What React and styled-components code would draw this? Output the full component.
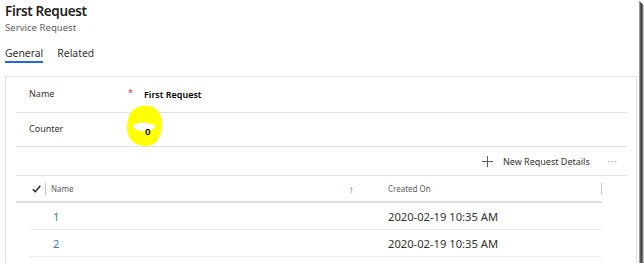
import styled, { createGlobalStyle } from "styled-components";

const GlobalStyle = createGlobalStyle`
  html, body {
    margin: 0;
    padding: 0;
    background: #ffffff;
  }
  body {
    font-family: "Segoe UI", "Noto Sans", "Liberation Sans", sans-serif;
    color: #323130;
  }
`;

const rows = [
  { id: "1", created: "2020-02-19 10:35 AM" },
  { id: "2", created: "2020-02-19 10:35 AM" },
];

export default function App() {
  return (
    <>
      <GlobalStyle />
      <Frame>
        <Header>
          <Title>First Request</Title>
          <Subtitle>Service Request</Subtitle>
          <Tabs>
            <Tab $active>General</Tab>
            <Tab>Related</Tab>
          </Tabs>
        </Header>

        <Card>
          <FormRow $height={35}>
            <FieldLabel>Name</FieldLabel>
            <Required>*</Required>
            <FieldValue $bold>First Request</FieldValue>
          </FormRow>
          <FormRow $height={33}>
            <FieldLabel>Counter</FieldLabel>
            <span />
            <FieldValue $bold>
              <Zero>0</Zero>
            </FieldValue>
            <Highlight viewBox="0 0 40 44" aria-hidden="true">
              <path
                d="M19 1.5 C30 0.5 37.5 9 37 21 C36.5 33 31 42.5 19.5 42 C8.5 41.5 1.5 34 2 22 C2.5 10 8 2.5 19 1.5 Z"
                fill="#ffff00"
              />
              <path d="M7.5 22.5 C11 17.5 24 17 31 22.5 C25 29 12 29 7.5 22.5 Z" fill="#ffffff" />
            </Highlight>
          </FormRow>

          <Toolbar>
            <ToolButton>
              <svg width="11" height="11" viewBox="0 0 11 11" aria-hidden="true">
                <path d="M5.5 0 V11 M0 5.5 H11" stroke="#605e5c" strokeWidth="1" />
              </svg>
              <span>New Request Details</span>
            </ToolButton>
            <More>···</More>
          </Toolbar>

          <GridHead>
            <CheckCell>
              <svg width="9" height="8" viewBox="0 0 9 8" aria-hidden="true">
                <path d="M0.8 4.2 L3.3 6.7 L8.3 0.8" stroke="#201f1e" strokeWidth="1.4" fill="none" />
              </svg>
            </CheckCell>
            <HeadCell $first>
              <span>Name</span>
              <SortArrow>↑</SortArrow>
            </HeadCell>
            <HeadCell $last>Created On</HeadCell>
          </GridHead>

          {rows.map((r) => (
            <GridRow key={r.id}>
              <span />
              <LinkCell>{r.id}</LinkCell>
              <DateCell>{r.created}</DateCell>
            </GridRow>
          ))}
        </Card>
      </Frame>
    </>
  );
}

const Frame = styled.div`
  position: relative;
  width: 639px;
  height: 263px;
  overflow: hidden;
  background: #ffffff;
  box-shadow: 1px 1px 0 #9a9a9a, 2px 2px 0 #5a5a5a, 3px 3px 0 #474747, 4px 4px 0 #6a6a6a,
    5px 5px 1px #c8c8c8;
`;

const Header = styled.div`
  padding-left: 5px;
`;

const Title = styled.div`
  font-size: 13.5px;
  font-weight: 600;
  letter-spacing: -0.35px;
  line-height: 20px;
  color: #201f1e;
  padding-top: 1px;
`;

const Subtitle = styled.div`
  font-size: 9.6px;
  line-height: 13px;
  color: #605e5c;
`;

const Tabs = styled.div`
  display: flex;
  gap: 14px;
  margin-top: 11px;
`;

const Tab = styled.div`
  font-size: 10.4px;
  line-height: 16px;
  color: #323130;
  border-bottom: 2px solid ${(p) => (p.$active ? "#2266e3" : "transparent")};
`;

const Card = styled.div`
  margin: 13px 0 0 5px;
  width: 611px;
  height: 200px;
  padding: 0 9px 0 10px;
  border: 1px solid #e1dfdd;
  border-bottom: none;
`;

const FormRow = styled.div`
  position: relative;
  display: grid;
  grid-template-columns: 99px 16px 1fr;
  align-items: center;
  height: ${(p) => p.$height}px;
  padding-left: 13px;
  border-bottom: 1px solid #e1dfdd;
`;

const FieldLabel = styled.div`
  font-size: 9px;
  color: #323130;
  margin-top: -2px;
`;

const Required = styled.div`
  color: #d13438;
  font-size: 9px;
  align-self: start;
  margin-top: 9px;
`;

const FieldValue = styled.div`
  position: relative;
  z-index: 1;
  font-size: 9px;
  font-weight: ${(p) => (p.$bold ? 600 : 400)};
  color: #000000;
`;

const Highlight = styled.svg`
  position: absolute;
  left: 109px;
  top: -9px;
  width: 40px;
  height: 44px;
`;

const Zero = styled.span`
  position: relative;
  font-size: 9.5px;
  margin-left: 1px;
  top: 2px;
`;

const Toolbar = styled.div`
  display: flex;
  justify-content: flex-end;
  align-items: center;
  gap: 18px;
  height: 28px;
  padding-right: 9px;
  border-bottom: 1px solid #e1dfdd;
`;

const ToolButton = styled.div`
  display: flex;
  align-items: center;
  gap: 10px;
  font-size: 9px;
  color: #323130;
`;

const More = styled.div`
  font-size: 9px;
  color: #8a8886;
  letter-spacing: 1px;
`;

const GridHead = styled.div`
  display: grid;
  grid-template-columns: 30px 337px 219px;
  align-items: center;
  height: 25px;
  width: 586px;
  border-bottom: 2px solid #e1dfdd;
`;

const CheckCell = styled.div`
  display: flex;
  justify-content: flex-end;
  align-items: center;
  height: 12px;
  padding-right: 4px;
  border-right: 1px solid #c8c6c4;
`;

const HeadCell = styled.div`
  display: flex;
  justify-content: space-between;
  align-items: center;
  height: 12px;
  font-size: 8px;
  color: #605e5c;
  padding-left: 5px;
  padding-right: ${(p) => (p.$first ? 29 : 0)}px;
  border-right: ${(p) => (p.$last ? "1px solid #c8c6c4" : "none")};
`;

const SortArrow = styled.span`
  font-size: 10px;
  color: #605e5c;
`;

const GridRow = styled.div`
  display: grid;
  grid-template-columns: 17px 337px 219px;
  align-items: center;
  height: 26px;
  width: 573px;
  margin-left: 13px;
  border-bottom: 1px solid #edebe9;
`;

const LinkCell = styled.div`
  font-size: 11px;
  color: #3a75b6;
  padding-left: 7px;
`;

const DateCell = styled.div`
  font-size: 11.2px;
  color: #323130;
  padding-left: 5px;
`;
